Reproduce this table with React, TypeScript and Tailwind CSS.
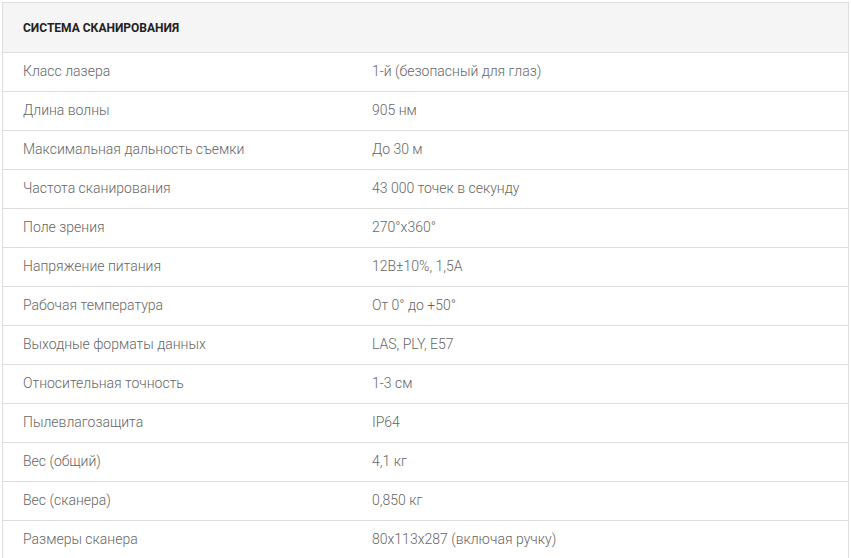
import React from "react";

const rows: [string, string][] = [
  ["Класс лазера", "1-й (безопасный для глаз)"],
  ["Длина волны", "905 нм"],
  ["Максимальная дальность съемки", "До 30 м"],
  ["Частота сканирования", "43 000 точек в секунду"],
  ["Поле зрения", "270°x360°"],
  ["Напряжение питания", "12В±10%, 1,5А"],
  ["Рабочая температура", "От 0° до +50°"],
  ["Выходные форматы данных", "LAS, PLY, E57"],
  ["Относительная точность", "1-3 см"],
  ["Пылевлагозащита", "IP64"],
  ["Вес (общий)", "4,1 кг"],
  ["Вес (сканера)", "0,850 кг"],
  ["Размеры сканера", "80x113x287 (включая ручку)"],
];

export default function App() {
  return (
    <div className="w-[851px] h-[558px] overflow-hidden bg-white pt-[2px] pl-[2px]" style={{ fontFamily: "Roboto, 'Noto Sans', sans-serif" }}>
      <div className="w-[847px] border border-[#dddddd] border-b-0">
        <div className="h-[50px] bg-[#f5f5f5] border-b border-[#dddddd] flex items-center pl-[20px] text-[12px] font-bold uppercase text-[#222222]">
          Система сканирования
        </div>
        {rows.map(([k, v]) => (
          <div key={k} className="h-[39px] border-b border-[#dddddd] grid grid-cols-[349px_1fr] items-center pb-[2px] text-[14px] font-light text-[#666666]">
            <div className="pl-[20px]">{k}</div>
            <div className="pl-[20px]">{v}</div>
          </div>
        ))}
      </div>
    </div>
  );
}
